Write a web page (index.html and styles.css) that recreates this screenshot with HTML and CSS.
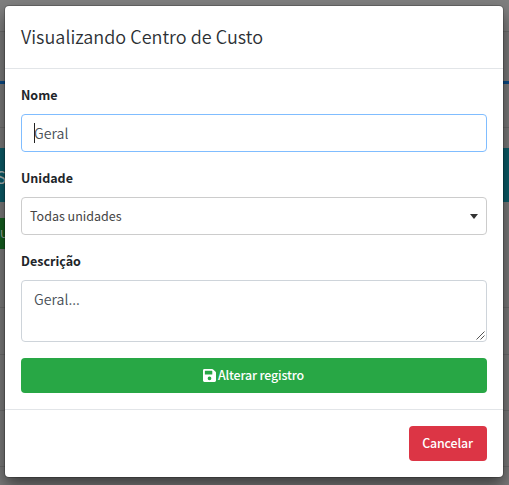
FILE: index.html
```html
<!DOCTYPE html>
<html lang="pt-BR">
<head>
<meta charset="utf-8">
<title>Centro de Custo</title>
<link rel="stylesheet" href="styles.css">
</head>
<body>
<div class="page">
  <div class="row row-top"></div>
  <div class="row row-nav"></div>
  <div class="row row-tabs"></div>
  <div class="row row-gap"></div>
  <div class="banner">S</div>
  <div class="toolbar"><span class="tool">U</span></div>
  <div class="row row-a"></div>
  <div class="row row-b"></div>
  <div class="row row-c"></div>
  <div class="row row-c"></div>
</div>
<div class="modal">
  <header class="modal-header"><h4 class="title"><span>Visualizando Centro de Custo</span></h4></header>
  <div class="modal-body">
    <label class="label">Nome</label>
    <div class="control focused"><span class="caret"></span>Geral</div>
    <label class="label">Unidade</label>
    <div class="control select"><span>Todas unidades</span><span class="arrow"></span></div>
    <label class="label">Descrição</label>
    <div class="control area">Geral...
      <svg class="grip" width="9" height="9" viewBox="0 0 9 9"><path d="M.5 8.5l8-8M4.5 8.5l4-4" stroke="#555" fill="none"/></svg>
    </div>
    <button class="btn save">
      <svg width="13" height="13" viewBox="0 0 448 448"><path fill="#fff" fill-rule="evenodd" d="M434 98 350 14A48 48 0 0 0 316 0H48A48 48 0 0 0 0 48v352a48 48 0 0 0 48 48h352a48 48 0 0 0 48-48V132a48 48 0 0 0-14-34ZM224 384a64 64 0 1 1 0-128 64 64 0 0 1 0 128Zm96-305v101a12 12 0 0 1-12 12H76a12 12 0 0 1-12-12V76a12 12 0 0 1 12-12h229Z"/></svg><span>Alterar registro</span>
    </button>
  </div>
  <footer class="modal-footer"><button class="btn cancel">Cancelar</button></footer>
</div>
</body>
</html>
```
FILE: styles.css
```css
* { box-sizing: border-box; }
body {
  margin: 0;
  height: 485px;
  overflow: hidden;
  font-family: "Noto Sans CJK JP", "Noto Sans", sans-serif;
  color: #212529;
}
.page { height: 485px; background: #7a7a7a; }
.row { border-bottom: 1px solid #6c6c6c; }
.row-top { height: 32px; background: #7f7f7f; }
.row-nav { height: 52px; border-bottom: 3px solid #0a4a86; }
.row-tabs { height: 44px; }
.row-gap { height: 20px; border: 0; }
.banner { height: 54px; background: #0b5c68; color: #a8b4b6; font-size: 17px; line-height: 57px; text-indent: -4px; }
.toolbar { height: 47px; padding-top: 16px; }
.tool { display: block; width: 60px; height: 31px; background: #14601f; color: #aaa; font-size: 11px; line-height: 31px; }
.row-a { height: 59px; }
.row-b { height: 47px; }
.row-c { height: 56px; }
.modal {
  position: absolute;
  left: 5px;
  top: 6px;
  width: 498px;
  height: 471px;
  background: #fff;
  border-radius: 4px;
  box-shadow: 0 8px 16px rgba(0, 0, 0, .5), 0 0 0 1px rgba(0, 0, 0, .2);
}
.modal-header { height: 63px; padding: 15px 16px 17px; border-bottom: 1px solid #e2e5e8; }
.title { margin: 0; font-size: 18px; font-weight: 350; line-height: 30px; letter-spacing: .02px; color: #2c3034; }
.modal-body { padding: 16px; }
.label { display: block; height: 21px; margin-bottom: 8px; font-size: 12.5px; font-weight: 700; line-height: 19px; }
.control {
  position: relative;
  height: 38px;
  margin-bottom: 16px;
  padding: 0 12px;
  border: 1px solid #ced4da;
  border-radius: 4px;
  color: #495057;
  font-size: 14.2px;
  font-weight: 350;
  line-height: 36px;
}
.focused { border-color: #80bdff; }
.caret { position: absolute; left: 12px; top: 8px; width: 1px; height: 20px; background: #222; }
.select { display: flex; align-items: center; justify-content: space-between; padding: 0 8px; color: #444; font-size: 12.5px; font-weight: 400; border-color: #ccc; }
.arrow { border: 4px solid transparent; border-top: 5px solid #333; border-bottom: 0; }
.area { height: 62px; padding-top: 6px; line-height: 24px; }
.grip { position: absolute; right: 1px; bottom: 1px; }
.btn {
  height: 35px;
  border: 0;
  border-radius: 4px;
  color: #fff;
  font-family: inherit;
  font-size: 12.4px;
  font-weight: 500;
  line-height: 33px;
  letter-spacing: -.15px;
  padding: 0 1px 1px 0;
}
.save { display: flex; width: 100%; align-items: center; justify-content: center; gap: 2px; background: #28a745; }
.modal-footer { display: flex; justify-content: flex-end; padding: 16px; border-top: 1px solid #e2e5e8; }
.cancel { width: 78px; background: #dc3545; }
```
